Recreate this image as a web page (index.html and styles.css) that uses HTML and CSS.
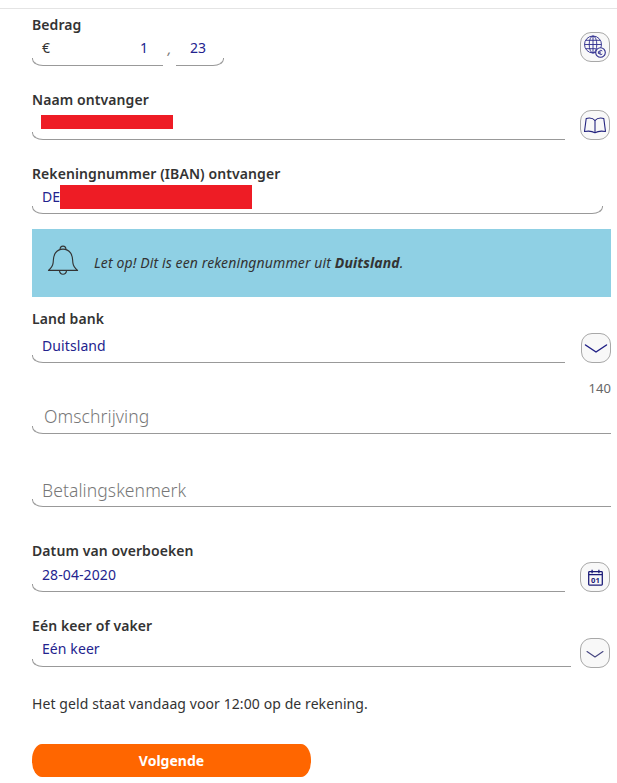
FILE: index.html
```html
<!DOCTYPE html>
<html lang="nl">
<head>
<meta charset="utf-8">
<title>Overboeken</title>
<link rel="stylesheet" href="styles.css">
</head>
<body>
<main class="form">
  <section class="row row-bedrag">
    <div class="field">
      <div class="label">Bedrag</div>
      <div class="amount">
        <div class="value amount-whole"><span class="euro">€</span><span>1</span></div>
        <span class="comma">,</span>
        <div class="value amount-cents">23</div>
      </div>
    </div>
    <button class="icon-btn btn-globe" type="button" aria-label="Valuta">
      <svg viewBox="0 0 24 24" width="24" height="24" fill="none" stroke="#2b2a8c" stroke-width="0.9">
        <circle cx="10" cy="9.500" r="8.500"/>
        <ellipse cx="10" cy="9.500" rx="3.800" ry="8.500"/>
        <path d="M10 1v17M1.500 9.500h17M2.800 5.300h14.400M2.800 13.700h10"/>
        <circle cx="17.500" cy="17.500" r="4.800" fill="#f8f8f8" stroke-width="1.100"/>
        <path d="M19.300 16a2.100 2.100 0 1 0 0 3M14.900 17h3M14.900 18.200h3" stroke-width="0.900"/>
      </svg>
    </button>
  </section>

  <section class="row row-naam">
    <div class="field">
      <div class="label">Naam ontvanger</div>
      <div class="value value-naam"><span class="redact redact-naam"></span></div>
    </div>
    <button class="icon-btn btn-book" type="button" aria-label="Adresboek">
      <svg viewBox="0 0 24 24" width="24" height="24" fill="none" stroke="#23237f" stroke-width="1.100" stroke-linejoin="round" stroke-linecap="round">
        <path d="M12 7.500C10 5.200 6 4.800 3.200 5.500L1.500 18.500c3.500-.7 7.500-.5 10.500 1.200 3-1.700 7-1.900 10.500-1.200L20.800 5.500C18 4.800 14 5.200 12 7.500z"/>
        <path d="M12 7.500v12"/>
      </svg>
    </button>
  </section>

  <section class="row row-iban">
    <div class="field field-iban">
      <div class="label">Rekeningnummer (IBAN) ontvanger</div>
      <div class="value value-iban">DE<span class="redact redact-iban"></span></div>
    </div>
  </section>

  <aside class="notice">
    <svg class="bell" viewBox="0 0 34 36" width="32" height="34" fill="none" stroke="#333" stroke-width="1.200" stroke-linejoin="round">
      <path d="M1.500 29c2.500-2 4.500-4 5-8 .5-4 0-7 2.500-10.500C11 7.700 14 6.500 17 6.500s6 1.200 8 4c2.500 3.500 2 6.500 2.500 10.500.5 4 2.500 6 5 8z"/>
      <path d="M13.800 7c.2-5 6.200-5 6.400 0M13.200 29c.6 5.500 7 5.500 7.600 0"/>
    </svg>
    <p>Let op! Dit is een rekeningnummer uit <strong>Duitsland</strong>.</p>
  </aside>

  <section class="row row-land">
    <div class="field">
      <div class="label">Land bank</div>
      <div class="value value-land">Duitsland</div>
    </div>
    <button class="icon-btn btn-land" type="button" aria-label="Kies land">
      <svg viewBox="0 0 24 24" width="24" height="24" fill="none" stroke="#1f1f85" stroke-width="1.500" stroke-linecap="round" stroke-linejoin="round">
        <path d="M1.500 9l10.500 7 10.500-7"/>
      </svg>
    </button>
  </section>

  <div class="counter">140</div>

  <section class="field field-omschrijving">
    <div class="value placeholder">Omschrijving</div>
  </section>

  <section class="field field-kenmerk">
    <div class="value placeholder">Betalingskenmerk</div>
  </section>

  <section class="row row-datum">
    <div class="field">
      <div class="label">Datum van overboeken</div>
      <div class="value value-datum">28-04-2020</div>
    </div>
    <button class="icon-btn btn-cal" type="button" aria-label="Kalender">
      <svg viewBox="2 2 20 20" width="17" height="17" fill="none" stroke="#1b1b78" stroke-width="1.500">
        <path d="M5 5h14a1 1 0 0 1 1 1v14a1 1 0 0 1-1 1H5a1 1 0 0 1-1-1V6a1 1 0 0 1 1-1z"/>
        <path d="M8 3v4M16 3v4M4 8.500h16"/>
        <text x="12" y="18.500" text-anchor="middle" class="cal-text">01</text>
      </svg>
    </button>
  </section>

  <section class="row row-keer">
    <div class="field">
      <div class="label">Eén keer of vaker</div>
      <div class="value value-keer">Eén keer</div>
    </div>
    <button class="icon-btn btn-keer" type="button" aria-label="Kies frequentie">
      <svg viewBox="0 0 24 24" width="24" height="24" fill="none" stroke="#44447f" stroke-width="1.100" stroke-linecap="round" stroke-linejoin="round">
        <path d="M4 10.500l8 5.500 8-5.500"/>
      </svg>
    </button>
  </section>

  <p class="hint">Het geld staat vandaag voor 12:00 op de rekening.</p>

  <button class="next" type="button">Volgende</button>
</main>
</body>
</html>
```
FILE: styles.css
```css
* { box-sizing: border-box; }

html, body {
  margin: 0;
  padding: 0;
  background: #fff;
}

body {
  font-family: "Noto Sans", "Open Sans", sans-serif;
  font-size: 14px;
  letter-spacing: .09px;
  color: #333;
  height: 783px;
  overflow: hidden;
}

.form {
  margin-top: 8px;
  border-top: 1px solid #e4e4e4;
  padding: 6px 6px 0 32px;
  display: flex;
  flex-direction: column;
}

.row {
  display: flex;
  align-items: flex-end;
}

.field { flex: 1; min-width: 0; }

.label {
  font-weight: 600;
  line-height: 20px;
  color: #333;
}

.value {
  position: relative;
  display: flex;
  align-items: center;
  padding-left: 10px;
  color: #23238e;
}

.value::after {
  content: "";
  position: absolute;
  left: 0;
  right: 0;
  bottom: 0;
  height: 7px;
  border-left: 1px solid #999;
  border-bottom: 1px solid #999;
  border-bottom-left-radius: 11px 7px;
}

.icon-btn {
  flex: none;
  width: 30px;
  height: 30px;
  margin: 0 1px 0 15px;
  padding: 0;
  display: flex;
  align-items: center;
  justify-content: center;
  background: #f8f8f8;
  border: 1px solid #a8a8a8;
  border-radius: 11px;
}

.row-bedrag { justify-content: space-between; }
.row-bedrag .icon-btn { align-self: flex-start; margin-top: 17px; }
.row-bedrag .field { flex: none; width: 192px; }
.amount { display: flex; }
.amount-whole {
  width: 131px;
  height: 31px;
  justify-content: space-between;
  padding: 0 15px 6px 10px;
}
.euro { color: #333; }
.comma {
  width: 13px;
  line-height: 28px;
  text-align: center;
  color: #777;
  font-style: italic;
}
.amount-cents {
  width: 48px;
  height: 31px;
  justify-content: center;
  padding: 0 4px 6px 0;
}
.amount-cents::after,
.value-iban::after {
  border-left: 0;
  border-right: 1px solid #999;
  border-bottom-left-radius: 0;
  border-bottom-right-radius: 11px 7px;
}
.value-iban::after {
  border-left: 1px solid #999;
  border-bottom-left-radius: 11px 7px;
}

.row-naam { margin-top: 24px; }
.value-naam { height: 30px; padding-left: 9px; }
.redact { display: block; background: #ee1c25; }
.redact-naam { width: 132px; height: 14px; margin-top: -6px; }

.row-iban { margin-top: 24px; }
.field-iban { margin-right: 8px; }
.value-iban { height: 30px; padding-bottom: 5px; }
.redact-iban { width: 192px; height: 24px; margin-top: 1px; }

.notice {
  display: flex;
  align-items: center;
  height: 68px;
  margin-top: 15px;
  padding: 0 0 2px 15px;
  background: #8fd0e4;
}
.bell { flex: none; margin-bottom: 4px; }
.notice p {
  margin: 0 0 0 15px;
  font-style: italic;
  letter-spacing: .12px;
  color: #333;
}

.row-land { margin-top: 12px; }
.row-land .icon-btn { margin: 0 0 0 16px; }
.value-land { height: 34px; padding-bottom: 2px; }

.counter {
  margin-top: 17px;
  text-align: right;
  font-size: 13px;
  line-height: 16px;
  color: #666;
}

.placeholder {
  font-size: 17.500px;
  font-weight: 300;
  color: #777;
}
.field-omschrijving { flex: none; margin-top: 8px; }
.field-omschrijving .value { height: 30px; padding: 0 0 6px 12px; }
.field-kenmerk { flex: none; margin-top: 42px; }
.field-kenmerk .value { height: 31px; padding-bottom: 3px; }

.row-datum { margin-top: 34px; }
.value-datum { height: 31px; padding-bottom: 4px; }
.cal-text {
  font-family: "Noto Sans", sans-serif;
  font-size: 9px;
  font-weight: 700;
  fill: #1b1b78;
  stroke: none;
}

.row-keer { margin-top: 24px; }
.row-keer .icon-btn { margin: 0 1px -1px 9px; }
.value-keer { height: 31px; padding-bottom: 7px; }

.hint {
  margin: 27px 0 0;
  line-height: 20px;
  color: #333;
}

.next {
  width: 279px;
  height: 33px;
  margin: 30px 0 0;
  padding: 0;
  border: 0;
  background: #ff6600;
  color: #fff;
  font-family: inherit;
  font-size: 14px;
  font-weight: 700;
  border-radius: 10px / 16px;
}
```
